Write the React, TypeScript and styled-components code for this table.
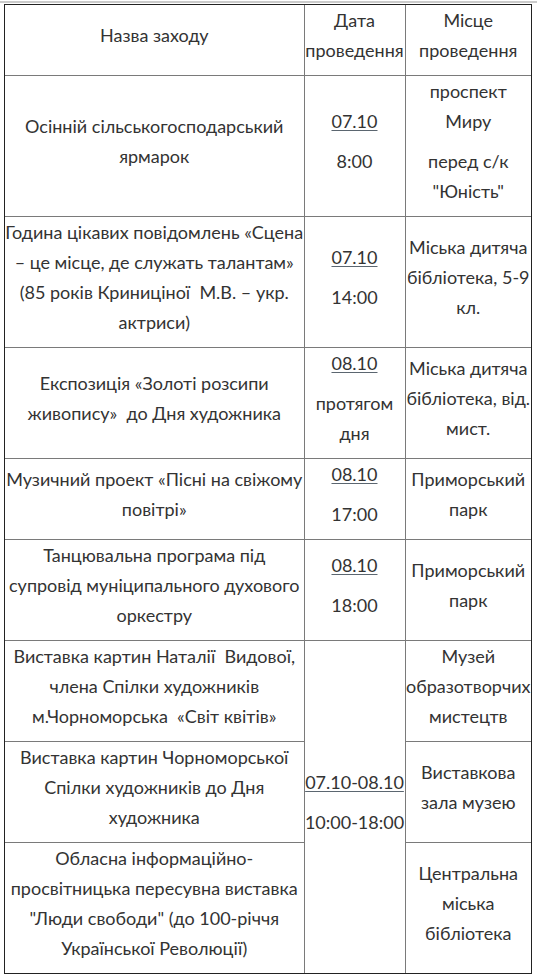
import React from 'react';
import styled, { createGlobalStyle } from 'styled-components';

const GlobalStyle = createGlobalStyle`
  html, body {
    margin: 0;
    padding: 0;
    background: #fff;
  }
  body {
    font-family: Lato, "Open Sans", sans-serif;
    color: #333;
  }
`;

const Page = styled.div`
  padding: 1px 0 0;
  width: 537px;
`;

const TopRule = styled.div`
  height: 2px;
  background: #cbcbcb;
  margin-bottom: 1px;
`;

const Frame = styled.div`
  margin-left: 4px;
  width: 526px;
  border: 1px solid #222;
`;

const Table = styled.table`
  width: 100%;
  table-layout: fixed;
  border-collapse: collapse;
  border-style: hidden;
`;

const Cell = styled.td`
  border: 1px solid #7a7a7a;
  padding: 0;
  text-align: center;
  vertical-align: middle;
  font-size: 18px;
  line-height: 30px;
  color: #333;
  overflow: visible;
`;

const Para = styled.p<{ $nowrap?: boolean }>`
  margin: 0 0 10px;
  white-space: ${(p) => (p.$nowrap ? 'nowrap' : 'normal')};
`;

const DateLink = styled.span`
  text-decoration: underline;
  text-decoration-color: #5b6670;
  text-underline-offset: 2px;
`;

type Row = {
  title: string;
  date?: { day: string; time: string; span?: number };
  place: string[];
};

const rows: Row[] = [
  {
    title: 'Осінній сільськогосподарський ярмарок',
    date: { day: '07.10', time: '8:00' },
    place: ['проспект Миру', 'перед с/к "Юність"'],
  },
  {
    title:
      'Година цікавих повідомлень «Сцена – це місце, де служать талантам» (85 років Криниціної\u00a0 М.В. – укр. актриси)',
    date: { day: '07.10', time: '14:00' },
    place: ['Міська дитяча бібліотека, 5-9 кл.'],
  },
  {
    title: 'Експозиція «Золоті розсипи живопису»\u00a0 до Дня художника',
    date: { day: '08.10', time: 'протягом дня' },
    place: ['Міська дитяча бібліотека,\u00a0від. мист.'],
  },
  {
    title: 'Музичний проект «Пісні на свіжому повітрі»',
    date: { day: '08.10', time: '17:00' },
    place: ['Приморський парк'],
  },
  {
    title: 'Танцювальна програма під супровід муніципального духового оркестру',
    date: { day: '08.10', time: '18:00' },
    place: ['Приморський парк'],
  },
  {
    title:
      'Виставка картин Наталії\u00a0 Видової, члена Спілки художників м.Чорноморська\u00a0 «Світ квітів»',
    date: { day: '07.10-08.10', time: '10:00-18:00', span: 3 },
    place: ['Музей образотворчих мистецтв'],
  },
  {
    title: 'Виставка картин Чорноморської Спілки художників до Дня художника',
    place: ['Виставкова зала музею'],
  },
  {
    title:
      'Обласна інформаційно-просвітницька пересувна виставка "Люди свободи" (до 100-річчя Української Революції)',
    place: ['Центральна міська бібліотека'],
  },
];

export default function App() {
  return (
    <Page>
      <GlobalStyle />
      <TopRule />
      <Frame>
        <Table>
          <colgroup>
            <col style={{ width: 299 }} />
            <col style={{ width: 101 }} />
            <col />
          </colgroup>
          <tbody>
            <tr>
              <Cell>
                <Para>Назва заходу</Para>
              </Cell>
              <Cell>
                <Para>Дата проведення</Para>
              </Cell>
              <Cell>
                <Para>Місце проведення</Para>
              </Cell>
            </tr>
            {rows.map((r, i) => (
              <tr key={i}>
                <Cell>
                  <Para>{r.title}</Para>
                </Cell>
                {r.date && (
                  <Cell rowSpan={r.date.span}>
                    <Para $nowrap>
                      <DateLink>{r.date.day}</DateLink>
                    </Para>
                    <Para $nowrap={r.date.time.indexOf(' ') < 0}>{r.date.time}</Para>
                  </Cell>
                )}
                <Cell>
                  {r.place.map((p, j) => (
                    <Para key={j}>{p}</Para>
                  ))}
                </Cell>
              </tr>
            ))}
          </tbody>
        </Table>
      </Frame>
    </Page>
  );
}
